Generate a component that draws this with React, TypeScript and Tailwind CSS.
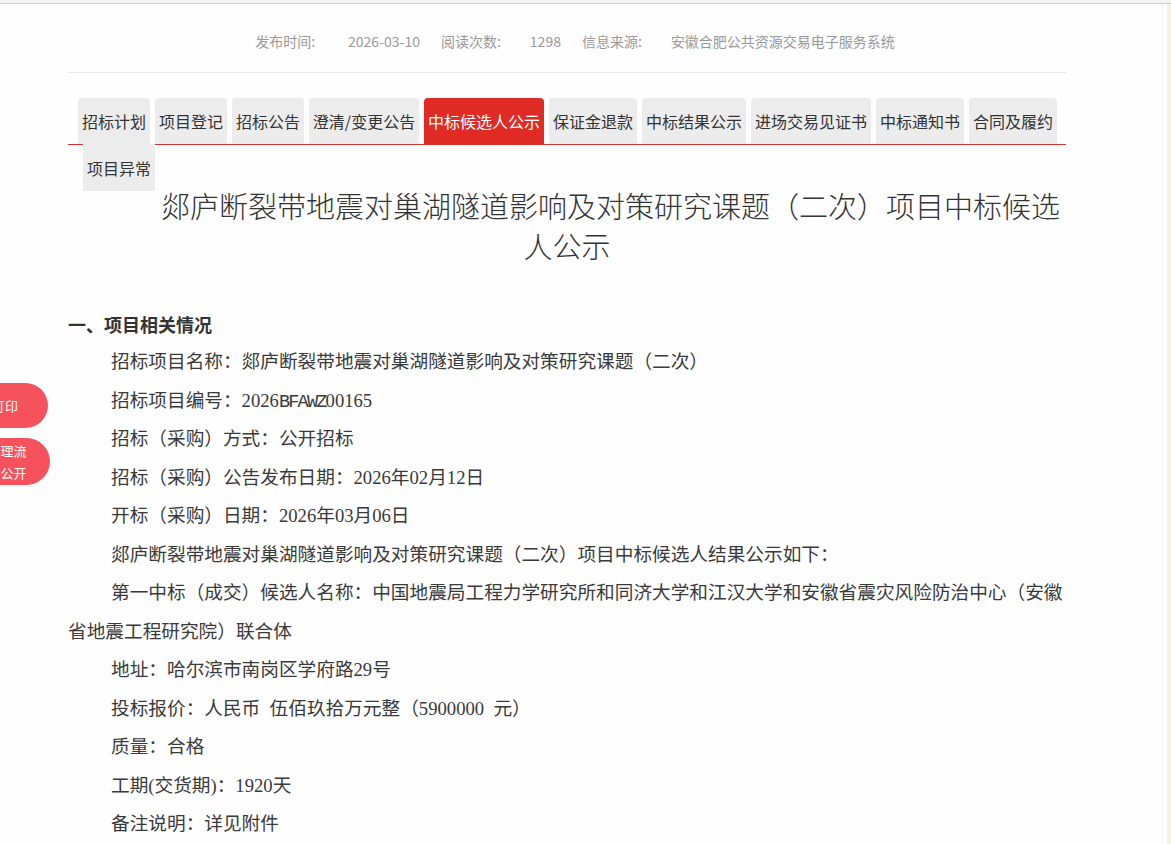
import React from "react";

const tabs: { t: string; w: string; active?: boolean }[] = [
  { t: "招标计划", w: "w-[72px]" },
  { t: "项目登记", w: "w-[72px]" },
  { t: "招标公告", w: "w-[72px]" },
  { t: "澄清/变更公告", w: "w-[110px]" },
  { t: "中标候选人公示", w: "w-[120px]", active: true },
  { t: "保证金退款", w: "w-[88px]" },
  { t: "中标结果公示", w: "w-[104px]" },
  { t: "进场交易见证书", w: "w-[120px]" },
  { t: "中标通知书", w: "w-[88px]" },
  { t: "合同及履约", w: "w-[88px]" },
];

const paras: string[] = [
  "招标项目名称：郯庐断裂带地震对巢湖隧道影响及对策研究课题（二次）",
  "招标项目编号：2026BFAWZ00165",
  "招标（采购）方式：公开招标",
  "招标（采购）公告发布日期：2026年02月12日",
  "开标（采购）日期：2026年03月06日",
  "郯庐断裂带地震对巢湖隧道影响及对策研究课题（二次）项目中标候选人结果公示如下：",
  "第一中标（成交）候选人名称：中国地震局工程力学研究所和同济大学和江汉大学和安徽省震灾风险防治中心（安徽省地震工程研究院）联合体",
  "地址：哈尔滨市南岗区学府路29号",
  "投标报价：人民币 伍佰玖拾万元整（5900000 元）",
  "质量：合格",
  "工期(交货期)：1920天",
  "备注说明：详见附件",
];

function Mixed({ text }: { text: string }) {
  const parts = text
    .replace(/ /g, "\u2002")
    .split(/([A-Za-z]+)/)
    .filter((s) => s.length > 0);
  return (
    <>
      {parts.map((s, i) =>
        /^[A-Za-z]+$/.test(s) ? (
          <span
            key={i}
            className="font-['Liberation_Mono',monospace] tracking-[-1.87px] leading-none"
          >
            {s}
          </span>
        ) : (
          <React.Fragment key={i}>{s}</React.Fragment>
        )
      )}
    </>
  );
}

export default function App() {
  return (
    <div className="relative h-[844px] overflow-hidden bg-white font-['Noto_Sans_CJK_SC',sans-serif] text-[#333]">
      {/* top strip */}
      <div className="h-[4px] bg-[#f4f4f4] border-b border-[#cfcfcf]" />
      <div className="flex h-[840px]">
        <div className="flex-1 bg-[#fefefe]">
          <div className="ml-[68px] w-[998px]">
            {/* meta */}
            <div className="flex justify-center pl-[16px] pt-[25px] pb-[19px] leading-[24px] text-[14px] text-[#999] border-b border-[#e6e6e6]">
              <span>发布时间:</span>
              <span className="ml-[33px]">2026-03-10</span>
              <span className="ml-[21px]">阅读次数:</span>
              <span className="ml-[29px]">1298</span>
              <span className="ml-[21px]">信息来源:</span>
              <span className="ml-[29px]">安徽合肥公共资源交易电子服务系统</span>
            </div>

            {/* tabs */}
            <ul className="mt-[25px] h-[47px] pl-[10px] border-b border-[#d6322d]">
              {tabs.map((tab) => (
                <li
                  key={tab.t}
                  className={`float-left mr-[5px] h-[46px] ${tab.w} rounded-t-[4px] flex items-center justify-center text-[16px] ${
                    tab.active ? "bg-[#e02a24] text-white" : "bg-[#ececec] text-[#333]"
                  }`}
                >
                  {tab.t}
                </li>
              ))}
              <li className="float-left clear-left ml-[5px] h-[47px] w-[72px] bg-[#ececec] flex items-center justify-center text-[16px] text-[#333]">
                项目异常
              </li>
            </ul>

            {/* title */}
            <h1 className="mt-[40px] text-center text-[29px] leading-[40px] font-light text-[#333]">
              郯庐断裂带地震对巢湖隧道影响及对策研究课题（二次）项目中标候选人公示
            </h1>

            {/* section */}
            <div className="clear-both mt-[40px] text-[18px] font-bold leading-[38px] text-[#333]">
              一、项目相关情况
            </div>
            <div className="font-['Liberation_Serif','Noto_Sans_CJK_SC',serif] text-[18.67px] leading-[38.5px] text-[#3a3a3a]">
              {paras.map((p) => (
                <p key={p} className="indent-[43px]">
                  <Mixed text={p} />
                </p>
              ))}
            </div>
          </div>
        </div>
        <div className="w-[1px] bg-[#f4f4f4] mr-[4px]" />
        <div className="w-[4px] bg-[#f7efe2]" />
      </div>

      {/* floating left buttons */}
      <div className="absolute left-[-38px] top-[383px] h-[45px] w-[86px] rounded-full bg-[#f5525e] flex items-center justify-center text-[13px] text-white">
        打印
      </div>
      <div className="absolute left-[-36px] top-[438px] h-[47px] w-[86px] rounded-full bg-[#f5525e] flex items-center justify-center text-[13px] leading-[22px] text-white text-center">
        <span className="w-[39px]">办理流程公开</span>
      </div>
    </div>
  );
}
